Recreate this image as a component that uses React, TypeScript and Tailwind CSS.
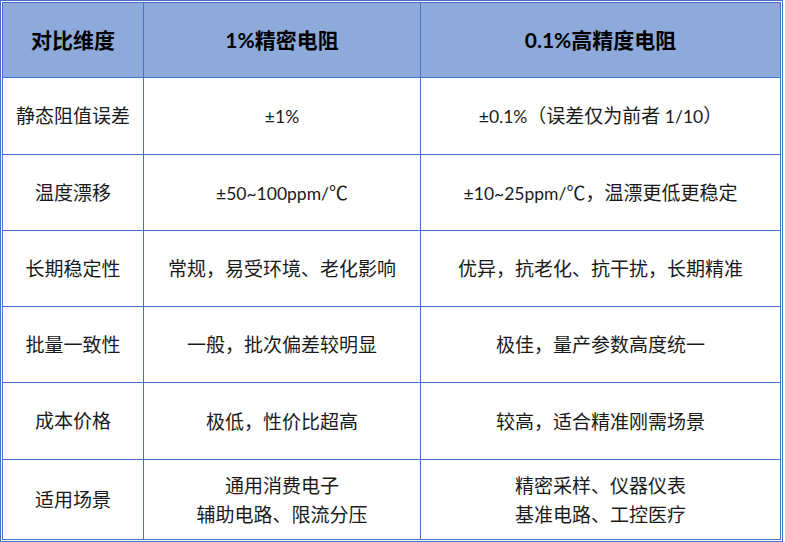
import React from "react";

const rows: { h: string; label: string; a: string[]; b: string[] }[] = [
  { h: "h-[77px]", label: "静态阻值误差", a: ["±1%"], b: ["±0.1%（误差仅为前者 1/10）"] },
  { h: "h-[76px]", label: "温度漂移", a: ["±50~100ppm/℃"], b: ["±10~25ppm/℃，温漂更低更稳定"] },
  { h: "h-[76px]", label: "长期稳定性", a: ["常规，易受环境、老化影响"], b: ["优异，抗老化、抗干扰，长期精准"] },
  { h: "h-[76px]", label: "批量一致性", a: ["一般，批次偏差较明显"], b: ["极佳，量产参数高度统一"] },
  { h: "h-[77px]", label: "成本价格", a: ["极低，性价比超高"], b: ["较高，适合精准刚需场景"] },
  { h: "h-[80px]", label: "适用场景", a: ["通用消费电子", "辅助电路、限流分压"], b: ["精密采样、仪器仪表", "基准电路、工控医疗"] },
];

const CJK = /([\u2103\u3000-\u9fff\uff00-\uffef]+)/;

function Txt({ t }: { t: string }) {
  const parts = t.split(CJK).filter((p) => p.length > 0);
  return (
    <div>
      {parts.map((p, i) =>
        CJK.test(p) ? (
          <span key={i} className="font-['Noto_Sans_CJK_SC',sans-serif] text-[19px]">
            {p}
          </span>
        ) : (
          <span key={i} className="font-['Lato',sans-serif] text-[17.5px]">
            {p}
          </span>
        )
      )}
    </div>
  );
}

export default function App() {
  return (
    <div className="w-[785px] h-[542px] bg-white overflow-hidden">
      <div
        className="w-[783px] h-[542px] border border-[#4472c4] p-px"
        style={{ fontFamily: 'Lato, "Noto Sans CJK SC", sans-serif' }}
      >
        <table className="w-[779px] table-fixed border-collapse text-center">
          <colgroup>
            <col className="w-[141px]" />
            <col className="w-[277px]" />
            <col />
          </colgroup>
          <thead>
            <tr className="h-[75px] bg-[#8eaadb] text-[21px] font-bold text-black">
              <th className="border border-[#4472c4] align-middle">对比维度</th>
              <th className="border border-[#4472c4] align-middle">1%精密电阻</th>
              <th className="border border-[#4472c4] align-middle">0.1%高精度电阻</th>
            </tr>
          </thead>
          <tbody className="text-[19px] text-[#1a1a1a]">
            {rows.map((r) => (
              <tr key={r.label} className={r.h}>
                <td className="border border-[#4472c4] align-middle leading-[28px]">{r.label}</td>
                <td className="border border-[#4472c4] align-middle leading-[28px]">
                  {r.a.map((t) => (
                    <Txt key={t} t={t} />
                  ))}
                </td>
                <td className="border border-[#4472c4] align-middle leading-[28px]">
                  {r.b.map((t) => (
                    <Txt key={t} t={t} />
                  ))}
                </td>
              </tr>
            ))}
          </tbody>
        </table>
      </div>
    </div>
  );
}
